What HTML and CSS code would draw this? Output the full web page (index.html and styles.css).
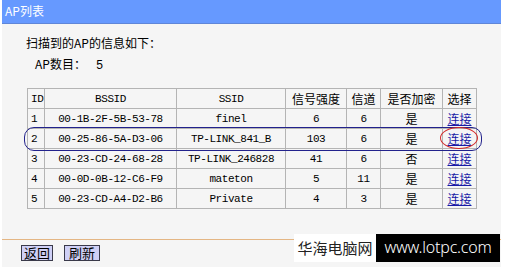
FILE: index.html
```html
<!DOCTYPE html>
<html lang="zh-CN">
<head>
<meta charset="utf-8">
<title>AP列表</title>
<link rel="stylesheet" href="styles.css">
</head>
<body>
<div class="panel">
  <div class="title">AP列表</div>
  <div class="content">
    <div class="intro">扫描到的AP的信息如下：</div>
    <div class="count"><span>AP数目：</span><span class="num">5</span></div>
    <div class="table-wrap">
      <table class="ap">
        <colgroup>
          <col class="c-id"><col class="c-bssid"><col class="c-ssid"><col class="c-sig"><col class="c-ch"><col class="c-enc"><col class="c-sel">
        </colgroup>
        <tr class="head"><td class="mono">ID</td><td class="mono">BSSID</td><td class="mono">SSID</td><td>信号强度</td><td>信道</td><td>是否加密</td><td>选择</td></tr>
        <tr><td class="mono">1</td><td class="mono">00-1B-2F-5B-53-78</td><td class="mono">finel</td><td class="mono">6</td><td class="mono">6</td><td>是</td><td><a href="#">连接</a></td></tr>
        <tr><td class="mono">2</td><td class="mono">00-25-86-5A-D3-06</td><td class="mono">TP-LINK_841_B</td><td class="mono">103</td><td class="mono">6</td><td>是</td><td><a href="#">连接</a></td></tr>
        <tr><td class="mono">3</td><td class="mono">00-23-CD-24-68-28</td><td class="mono">TP-LINK_246828</td><td class="mono">41</td><td class="mono">6</td><td>否</td><td><a href="#">连接</a></td></tr>
        <tr><td class="mono">4</td><td class="mono">00-0D-0B-12-C6-F9</td><td class="mono">mateton</td><td class="mono">5</td><td class="mono">11</td><td>是</td><td><a href="#">连接</a></td></tr>
        <tr><td class="mono">5</td><td class="mono">00-23-CD-A4-D2-B6</td><td class="mono">Private</td><td class="mono">4</td><td class="mono">3</td><td>是</td><td><a href="#">连接</a></td></tr>
      </table>
      <div class="mark-row"></div>
      <div class="mark-link"></div>
    </div>
  </div>
  <div class="footer">
    <span class="btn">返回</span><span class="btn btn-wide">刷新</span>
  </div>
  <div class="watermark"><span class="wm-cn">华海电脑网</span><span class="wm-url">www.lotpc.com</span></div>
</div>
</body>
</html>
```

FILE: styles.css
```css
html, body {
  margin: 0;
  padding: 0;
  background: #ffffff;
}
body {
  font-family: "Noto Sans CJK SC", sans-serif;
  font-size: 12px;
  color: #000;
}
.panel {
  position: relative;
  margin-left: 2px;
  width: 499px;
  height: 267px;
  background: #f5f5f5;
}
.title {
  height: 23px;
  line-height: 22px;
  background: #6699ff;
  border-bottom: 1px solid #5f86d8;
  color: #fff;
  padding-left: 3px;
  font-size: 12px;
}
.content {
  padding: 9px 0 0 24px;
}
.intro {
  line-height: 20px;
  height: 20px;
}
.count {
  line-height: 20px;
  height: 20px;
  margin-top: 1px;
  padding-left: 9px;
}
.count .num {
  margin-left: 10px;
  font-family: "Liberation Mono", monospace;
}
.table-wrap {
  position: relative;
  margin-top: 14px;
  margin-left: 1px;
  width: 449px;
}
table.ap {
  border-collapse: collapse;
  table-layout: fixed;
  width: 449px;
  border: 1px solid #9c9c9c;
}
.ap td {
  border: 1px solid #b4b4b4;
  height: 19px;
  padding: 0;
  text-align: center;
  vertical-align: middle;
  line-height: 18px;
  white-space: nowrap;
  overflow: hidden;
}
.ap tr td:first-child {
  text-align: left;
  padding-left: 3px;
}
.ap .mono {
  font-family: "Liberation Mono", monospace;
  font-size: 11px;
  letter-spacing: -0.45px;
}
.c-id { width: 17px; }
.c-bssid { width: 132px; }
.c-ssid { width: 109px; }
.c-sig { width: 61px; }
.c-ch { width: 34px; }
.c-enc { width: 62px; }
.c-sel { width: 34px; }
.ap a {
  color: #1a1aa6;
  text-decoration: underline;
}
.mark-row {
  position: absolute;
  left: -3px;
  top: 39px;
  width: 456px;
  height: 22px;
  border: 1px solid #22228c;
  border-radius: 10px;
  pointer-events: none;
}
.mark-link {
  position: absolute;
  left: 413px;
  top: 39px;
  width: 36px;
  height: 20px;
  border: 1px solid #d42a2a;
  border-radius: 50%;
  pointer-events: none;
}
.footer {
  margin-top: 30px;
  border-top: 1px solid #e4b684;
  padding: 5px 0 0 19px;
  display: flex;
  gap: 11px;
}
.btn {
  display: inline-block;
  height: 14px;
  line-height: 14px;
  padding: 0 2px;
  border: 1px solid #3a3a4a;
  background: #cfd0f6;
  font-size: 13px;
  color: #000;
}
.btn-wide {
  padding: 0 4px;
}
.watermark {
  position: absolute;
  left: 292px;
  top: 234px;
  height: 28px;
  display: flex;
}
.wm-cn {
  width: 82px;
  height: 28px;
  line-height: 28px;
  background: #ffffff;
  color: #222;
  font-size: 15px;
  text-align: center;
}
.wm-url {
  width: 124px;
  height: 28px;
  line-height: 27px;
  background: #000;
  color: #fff;
  font-family: "Noto Sans", sans-serif;
  font-weight: 300;
  font-size: 16px;
  text-align: center;
  letter-spacing: -0.2px;
}
```
